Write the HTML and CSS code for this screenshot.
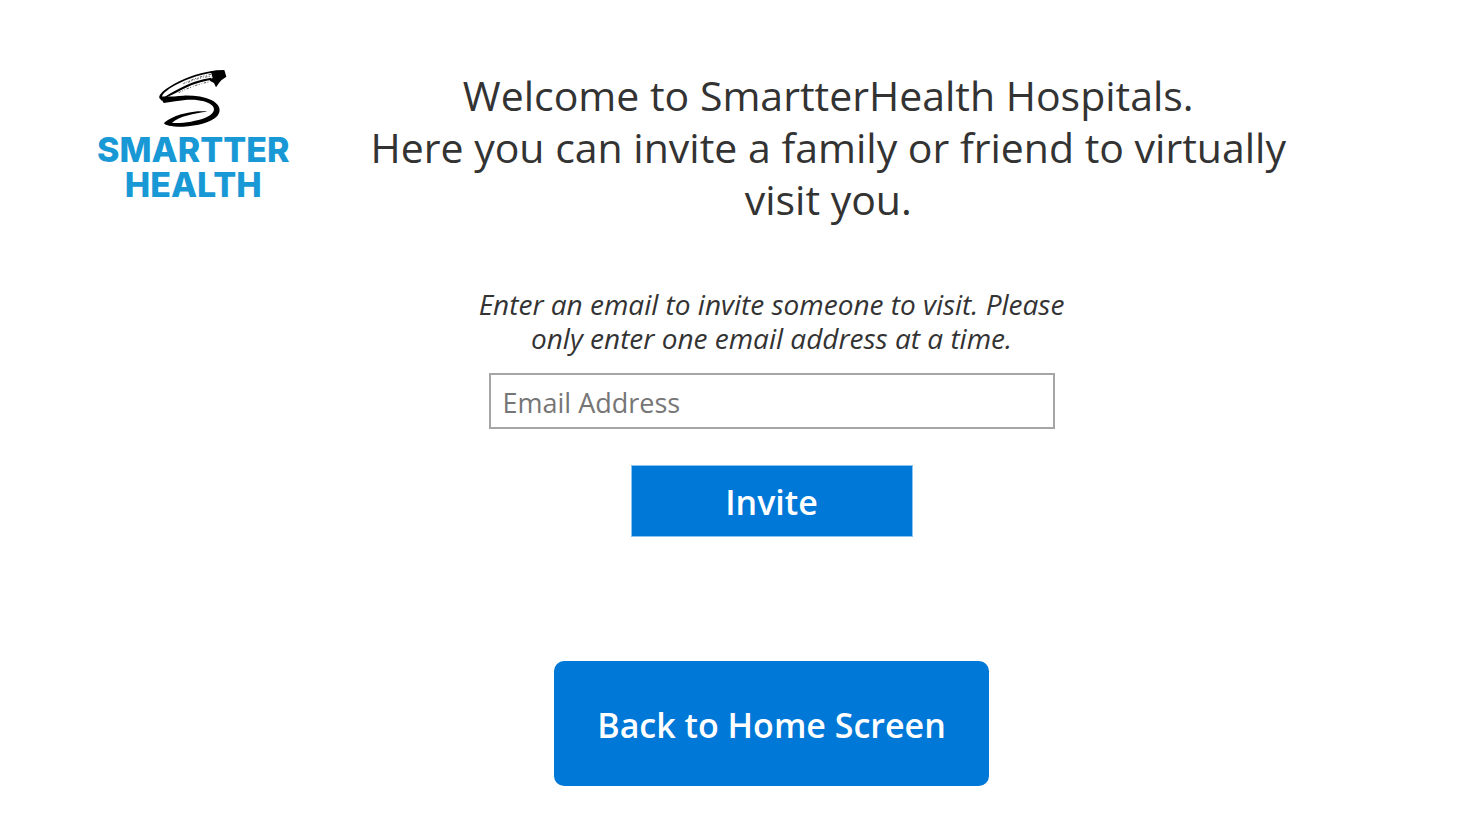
FILE: index.html
```html
<!DOCTYPE html>
<html lang="en">
<head>
<meta charset="utf-8">
<meta name="viewport" content="width=device-width, initial-scale=1">
<title>SmartterHealth Hospitals</title>
<link rel="stylesheet" href="styles.css">
</head>
<body>
<header class="header">
  <div class="logo">
    <svg class="logo-mark" viewBox="30 22 210 177" aria-hidden="true">
      <path d="M188 29 L205 26 L229 25 L235 45 L220 56 L213 64 L204 77 L198 64 L185 57 L194 48 Z"/>
      <path d="M192 28 C150 34 100 52 62 77 C42 90 32 101 34 109 L42 118 L50 110 C36 109 40 98 66 80 C102 56 150 40 192 33 Z"/>
      <path d="M42 112 C64 94 104 74 140 60 C158 54 175 50 190 48 L192 55 C158 59 128 70 98 86 C84 94 70 101 58 106 Z"/>
      <path d="M36 104 C55 106 80 104 106 102 C138 101 168 105 190 115 C214 127 222 146 208 163 C190 182 148 193 105 195 C76 196 48 191 48 184 C62 169 100 154 138 150 C156 148 170 149 178 150 C138 154 94 164 72 183 C92 187 142 180 172 168 C194 159 204 146 194 133 C176 115 132 109 82 119 L47 124 Z"/>
      <path class="logo-bristle" d="M106 66 C130 54 160 43 194 37 M120 62 C145 51 170 45 198 43 M92 93 C118 80 150 67 182 61"/>
    </svg>
    <div class="logo-name">SMARTTER<br>HEALTH</div>
  </div>
  <h1 class="title">Welcome to SmartterHealth Hospitals.<br>Here you can invite a family or friend to virtually visit you.</h1>
</header>
<main class="main">
  <form class="invite">
    <label class="hint" for="email">Enter an email to invite someone to visit. Please only enter one email address at a time.</label>
    <input class="email" id="email" type="email" placeholder="Email Address">
    <button class="button" type="button">Invite</button>
  </form>
  <button class="button button-home" type="button">Back to Home Screen</button>
</main>
</body>
</html>
```
FILE: styles.css
```css
* {
  box-sizing: border-box;
}

body {
  margin: 0;
  background: #fff;
  color: #333;
  font-family: "Open Sans", "Noto Sans", sans-serif;
}

.header {
  display: flex;
  align-items: flex-start;
  gap: 56px;
  padding: 69px 165px 0 97px;
}

.logo {
  display: flex;
  flex-direction: column;
  align-items: center;
  flex: none;
}

.logo-mark {
  width: 70px;
  height: 59px;
}

.logo-bristle {
  fill: none;
  stroke: #000;
  stroke-width: 2;
  stroke-dasharray: 7 4 3 6 2 5;
}

.logo-name {
  margin-top: 4px;
  color: #1899d6;
  font: 800 34px/35px Inter, sans-serif;
  text-align: center;
}

.title {
  flex: 1;
  margin: 0;
  font-size: 41px;
  font-weight: 400;
  line-height: 52px;
  text-align: center;
}

.main {
  display: flex;
  flex-direction: column;
  align-items: center;
  gap: 124px;
  padding: 62px 0 40px 67px;
}

.invite {
  display: flex;
  flex-direction: column;
  align-items: center;
}

.hint {
  max-width: 620px;
  font-size: 28px;
  font-style: italic;
  line-height: 34px;
  text-align: center;
}

.email {
  width: 566px;
  max-width: 100%;
  height: 56px;
  margin: 18px 0 36px;
  padding: 2px 12px 0;
  border: 2px solid #a6a6a6;
  border-radius: 0;
  color: #333;
  font: 27px "Open Sans", "Noto Sans", sans-serif;
}

.email::placeholder {
  color: #767676;
}

.button {
  min-width: 282px;
  padding: 12px 40px 10px;
  border: 1px solid #8cc4ee;
  background: #0078d7;
  color: #fff;
  font: 600 34px/48px "Open Sans", "Noto Sans", sans-serif;
}

.button-home {
  min-width: 435px;
  padding: 40px 32px 37px;
  border: 0;
  border-radius: 10px;
}
```
